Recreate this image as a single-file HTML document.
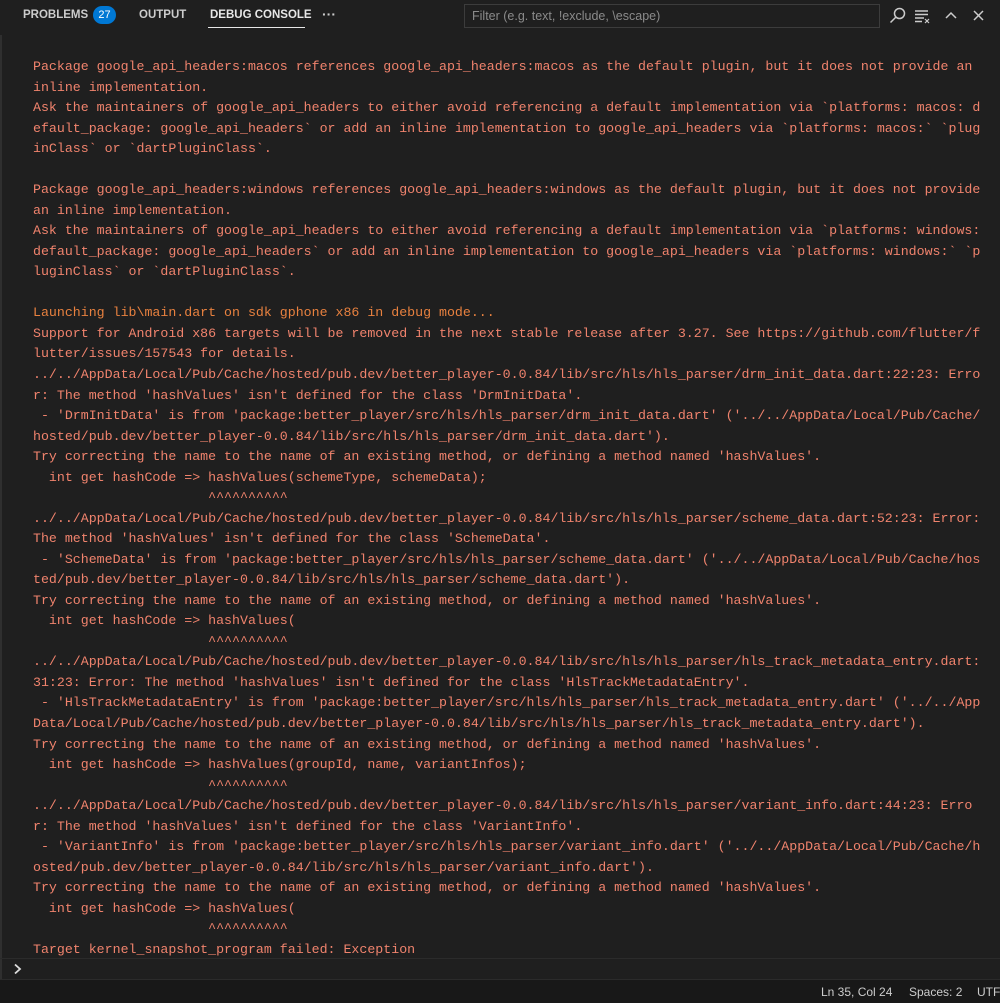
<!DOCTYPE html>
<html><head><meta charset="utf-8"><style>
html,body{margin:0;padding:0;background:#1f1f1f;width:1000px;height:1003px;overflow:hidden;position:relative;font-family:"Liberation Sans",sans-serif}
.tabs{position:absolute;top:0;left:0;height:32px;width:1000px}
.tab{position:absolute;top:9px;font-size:11.5px;font-weight:bold;color:#cccccc;letter-spacing:0}
.badge{position:absolute;left:93px;top:6px;width:23px;height:18px;border-radius:9px;background:#0078d4;color:#fff;font-size:11px;text-align:center;line-height:18px}
.filter{position:absolute;left:464px;top:4px;width:416px;height:24px;border:1px solid #3c3c3c;box-sizing:border-box;color:#8b8b8b;font-size:12.5px;line-height:22px;padding-left:7px;background:#1f1f1f}
.lb{position:absolute;left:0;top:35px;width:2px;height:945px;background:#2f2f2f}
pre{position:absolute;left:33px;top:57px;margin:0;font-family:"Liberation Mono",monospace;font-size:13.27px;line-height:20.53px;color:#f0836d;white-space:pre}
.o{color:#e8813f}
.sep{position:absolute;left:0;width:1000px;height:1px;background:#2b2b2b}
.status{position:absolute;left:0;top:980px;width:1000px;height:23px;background:#181818;color:#cccccc;font-size:12px;white-space:nowrap;overflow:hidden}
.status span{position:absolute;top:5px}
</style></head><body>
<div class="tabs">
<div class="tab" style="left:23px">PROBLEMS</div>
<div class="badge">27</div>
<div class="tab" style="left:139px">OUTPUT</div>
<div class="tab" style="left:210px;color:#e7e7e7">DEBUG CONSOLE</div>
<div style="position:absolute;left:208px;top:27px;width:97px;height:1px;background:#e7e7e7"></div>
<div class="tab" style="left:322px;top:6px;font-size:14px">···</div>
<div class="filter">Filter (e.g. text, !exclude, \escape)</div>
<svg style="position:absolute;left:886px;top:5px" width="110" height="22" viewBox="0 0 110 22" fill="none" stroke="#cccccc" stroke-width="1.5">
<circle cx="13.5" cy="8.5" r="5"/><line x1="10" y1="12" x2="4.5" y2="17.5"/>
<line x1="29" y1="6" x2="42" y2="6"/><line x1="29" y1="9.5" x2="42" y2="9.5"/><line x1="29" y1="13" x2="38" y2="13"/><line x1="29" y1="16.5" x2="36" y2="16.5"/>
<line x1="39" y1="14" x2="43" y2="18" stroke-width="1.2"/><line x1="43" y1="14" x2="39" y2="18" stroke-width="1.2"/>
<polyline points="60,13 65,8 70,13"/>
<line x1="88" y1="6" x2="97" y2="15"/><line x1="97" y1="6" x2="88" y2="15"/>
</svg>
</div>
<div class="lb"></div>
<pre>Package google_api_headers:macos references google_api_headers:macos as the default plugin, but it does not provide an
inline implementation.
Ask the maintainers of google_api_headers to either avoid referencing a default implementation via `platforms: macos: d
efault_package: google_api_headers` or add an inline implementation to google_api_headers via `platforms: macos:` `plug
inClass` or `dartPluginClass`.

Package google_api_headers:windows references google_api_headers:windows as the default plugin, but it does not provide
an inline implementation.
Ask the maintainers of google_api_headers to either avoid referencing a default implementation via `platforms: windows:
default_package: google_api_headers` or add an inline implementation to google_api_headers via `platforms: windows:` `p
luginClass` or `dartPluginClass`.

<span class="o">Launching lib\main.dart on sdk gphone x86 in debug mode...</span>
Support for Android x86 targets will be removed in the next stable release after 3.27. See https://github.com/flutter/f
lutter/issues/157543 for details.
../../AppData/Local/Pub/Cache/hosted/pub.dev/better_player-0.0.84/lib/src/hls/hls_parser/drm_init_data.dart:22:23: Erro
r: The method 'hashValues' isn't defined for the class 'DrmInitData'.
 - 'DrmInitData' is from 'package:better_player/src/hls/hls_parser/drm_init_data.dart' ('../../AppData/Local/Pub/Cache/
hosted/pub.dev/better_player-0.0.84/lib/src/hls/hls_parser/drm_init_data.dart').
Try correcting the name to the name of an existing method, or defining a method named 'hashValues'.
  int get hashCode => hashValues(schemeType, schemeData);
                      ^^^^^^^^^^
../../AppData/Local/Pub/Cache/hosted/pub.dev/better_player-0.0.84/lib/src/hls/hls_parser/scheme_data.dart:52:23: Error:
The method 'hashValues' isn't defined for the class 'SchemeData'.
 - 'SchemeData' is from 'package:better_player/src/hls/hls_parser/scheme_data.dart' ('../../AppData/Local/Pub/Cache/hos
ted/pub.dev/better_player-0.0.84/lib/src/hls/hls_parser/scheme_data.dart').
Try correcting the name to the name of an existing method, or defining a method named 'hashValues'.
  int get hashCode => hashValues(
                      ^^^^^^^^^^
../../AppData/Local/Pub/Cache/hosted/pub.dev/better_player-0.0.84/lib/src/hls/hls_parser/hls_track_metadata_entry.dart:
31:23: Error: The method 'hashValues' isn't defined for the class 'HlsTrackMetadataEntry'.
 - 'HlsTrackMetadataEntry' is from 'package:better_player/src/hls/hls_parser/hls_track_metadata_entry.dart' ('../../App
Data/Local/Pub/Cache/hosted/pub.dev/better_player-0.0.84/lib/src/hls/hls_parser/hls_track_metadata_entry.dart').
Try correcting the name to the name of an existing method, or defining a method named 'hashValues'.
  int get hashCode => hashValues(groupId, name, variantInfos);
                      ^^^^^^^^^^
../../AppData/Local/Pub/Cache/hosted/pub.dev/better_player-0.0.84/lib/src/hls/hls_parser/variant_info.dart:44:23: Erro
r: The method 'hashValues' isn't defined for the class 'VariantInfo'.
 - 'VariantInfo' is from 'package:better_player/src/hls/hls_parser/variant_info.dart' ('../../AppData/Local/Pub/Cache/h
osted/pub.dev/better_player-0.0.84/lib/src/hls/hls_parser/variant_info.dart').
Try correcting the name to the name of an existing method, or defining a method named 'hashValues'.
  int get hashCode => hashValues(
                      ^^^^^^^^^^
Target kernel_snapshot_program failed: Exception</pre>
<div class="sep" style="top:958px"></div>
<svg style="position:absolute;left:13px;top:963px" width="10" height="12" viewBox="0 0 10 12" fill="none" stroke="#dddddd" stroke-width="1.8"><polyline points="2,1.5 7,6 2,10.5"/></svg>
<div class="sep" style="top:979px"></div>
<div class="status">
<span style="left:821px">Ln 35, Col 24</span>
<span style="left:909px">Spaces: 2</span>
<span style="left:977px">UTF-8</span>
</div>
</body></html>
